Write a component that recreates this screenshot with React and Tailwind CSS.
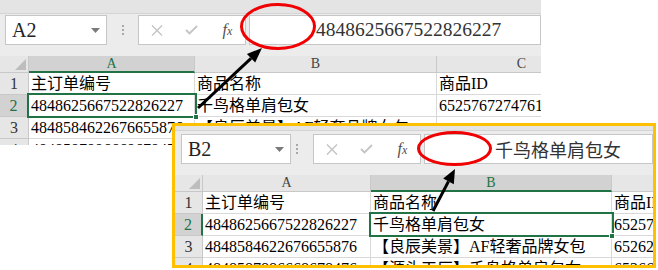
import React from "react";

const GREEN = "#217346";
const cellFont = { fontFamily: '"Liberation Serif", "Noto Sans CJK SC", serif' };

const data = [
  ["主订单编号", "商品名称", "商品ID"],
  ["4848625667522826227", "千鸟格单肩包女", "6525767274761"],
  ["4848584622676655876", "【良辰美景】AF轻奢品牌女包", "6526214985732"],
  ["4848587886668678476", "【源头工厂】千鸟格单肩包女", "6526613598241"],
];

function CancelIcon() {
  return (
    <svg width="12" height="11" viewBox="0 0 12 11">
      <path d="M1 0.5 L11 10.5 M11 0.5 L1 10.5" stroke="#c4c4c4" strokeWidth="1.4" fill="none" />
    </svg>
  );
}

function EnterIcon() {
  return (
    <svg width="13" height="10" viewBox="0 0 13 10">
      <path d="M1 5 L4.5 8.5 L12 1" stroke="#c4c4c4" strokeWidth="1.8" fill="none" />
    </svg>
  );
}

function FxIcon() {
  return (
    <span className="italic text-[16px] leading-none text-[#505050]" style={{ fontFamily: '"Liberation Serif", serif' }}>
      f<span className="text-[12px]">x</span>
    </span>
  );
}

function Dots() {
  return (
    <div className="flex flex-col gap-[2px]">
      <div className="w-[2px] h-[2px] bg-[#a8a8a8]" />
      <div className="w-[2px] h-[2px] bg-[#a8a8a8]" />
      <div className="w-[2px] h-[2px] bg-[#a8a8a8]" />
    </div>
  );
}

function Caret() {
  return (
    <svg width="9" height="5" viewBox="0 0 9 5">
      <path d="M0 0 L9 0 L4.5 5 Z" fill="#7a7a7a" />
    </svg>
  );
}

function FormulaBar({ name, nameClass, dotsClass, inputClass, children }) {
  return (
    <div className="flex items-center h-[30px]">
      <div className={`h-[30px] bg-white border border-[#c6c6c6] flex items-center justify-between pl-[6px] pr-[6px] ${nameClass}`}>
        <span className="text-[20px] leading-none text-[#222]" style={{ fontFamily: '"Liberation Serif", serif' }}>{name}</span>
        <Caret />
      </div>
      <div className={dotsClass}><Dots /></div>
      <div className="h-[30px] w-[108px] bg-white border border-[#c6c6c6] flex items-center">
        <div className="w-[36px] flex justify-center"><CancelIcon /></div>
        <div className="w-[36px] flex justify-center"><EnterIcon /></div>
        <div className="w-[36px] flex justify-center"><FxIcon /></div>
      </div>
      <div className={`h-[30px] flex-1 bg-white border border-[#c6c6c6] flex items-center ${inputClass}`}>
        {children}
      </div>
    </div>
  );
}

function Grid({ gridClass, selCol, selRow, frameClass, handleClass, hidden = [] }) {
  const headers = ["A", "B", "C"];
  return (
    <div className={`relative grid ${gridClass}`}>
      <div className="h-[17px] bg-[#e6e6e6] border-r border-b border-[#c8c8c8] relative">
        <svg className="absolute right-[2px] bottom-[2px]" width="11" height="11" viewBox="0 0 11 11">
          <path d="M11 0 L11 11 L0 11 Z" fill="#bdbdbd" />
        </svg>
      </div>
      {headers.map((h, i) => (
        <div
          key={h}
          className={
            i === selCol
              ? "h-[17px] bg-[#d2d2d2] border-r border-[#c8c8c8] border-b-2 border-b-[#217346] flex items-center justify-center text-[14px] leading-none text-[#217346]"
              : "h-[17px] bg-[#e6e6e6] border-r border-b border-[#c8c8c8] flex items-center justify-center text-[14px] leading-none text-[#444]"
          }
          style={{ fontFamily: '"Liberation Serif", serif' }}
        >
          {h}
        </div>
      ))}
      {data.map((row, r) => (
        <React.Fragment key={r}>
          <div
            className={
              r === selRow
                ? "h-[22px] bg-[#d2d2d2] border-b border-[#c8c8c8] border-r-2 border-r-[#217346] flex items-center justify-center text-[16px] leading-none text-[#217346]"
                : "h-[22px] bg-[#e6e6e6] border-r border-b border-[#c8c8c8] flex items-center justify-center text-[16px] leading-none text-[#333]"
            }
            style={{ fontFamily: '"Liberation Serif", serif' }}
          >
            {r + 1}
          </div>
          {row.map((c, ci) => (
            <div
              key={ci}
              className="h-[22px] bg-white border-r border-b border-[#d9d9d9] flex items-center pl-[2px] text-[16px] leading-none text-black whitespace-nowrap overflow-hidden"
              style={cellFont}
            >
              {hidden.includes(`${r}-${ci}`) ? "" : c}
            </div>
          ))}
        </React.Fragment>
      ))}
      <div className={`absolute border-2 border-[#217346] ${frameClass}`} />
      <div className={`absolute w-[6px] h-[6px] bg-[#217346] border border-white ${handleClass}`} />
    </div>
  );
}

export default function App() {
  return (
    <div className="relative w-[658px] h-[270px] bg-white overflow-hidden">
      {/* back screenshot */}
      <div className="w-[541px] h-[145px] overflow-hidden bg-[#ececec]">
        <div className="h-[14px] bg-[#e4e4e4] border-b border-[#d4d4d4]" />
        <div className="pt-[1px] pl-[5px] pb-[11px]">
          <FormulaBar
            name="A2"
            nameClass="w-[102px]"
            dotsClass="w-[31px] flex justify-center"
            inputClass="ml-[3px] pl-[66px]"
          >
            <span className="text-[19.5px] leading-none text-[#333]" style={{ fontFamily: '"Liberation Serif", serif' }}>
              4848625667522826227
            </span>
          </FormulaBar>
        </div>
        <Grid
          gridClass="grid-cols-[29px_166px_242px_170px]"
          selCol={0}
          selRow={1}
          hidden={["2-2"]}
          frameClass="left-[27px] top-[37px] w-[170px] h-[25px]"
          handleClass="left-[193px] top-[58px]"
        />
      </div>

      {/* front screenshot */}
      <div className="absolute left-[172px] top-[123px] w-[484px] h-[145px] border-[3px] border-[#ffc000] bg-[#ececec] overflow-hidden">
        <div className="h-[5px] bg-[#e4e4e4] border-b border-[#d4d4d4]" />
        <div className="pt-[3px] pl-[6px] pb-[11px]">
          <FormulaBar
            name="B2"
            nameClass="w-[110px]"
            dotsClass="w-[22px] flex justify-center pr-[10px]"
            inputClass="ml-[3px] pl-[70px]"
          >
            <span className="text-[18px] leading-none text-[#333]" style={{ fontFamily: '"Noto Sans CJK SC", sans-serif' }}>
              千鸟格单肩包女
            </span>
          </FormulaBar>
        </div>
        <Grid
          gridClass="grid-cols-[28px_168px_241px_170px]"
          selCol={1}
          selRow={1}
          frameClass="left-[194px] top-[37px] w-[245px] h-[25px]"
          handleClass="left-[434px] top-[58px]"
        />
      </div>

      {/* annotations */}
      <svg className="absolute left-0 top-0 pointer-events-none" width="658" height="270" viewBox="0 0 658 270">
        <ellipse cx="278" cy="26.5" rx="36.5" ry="22" fill="none" stroke="#f00000" strokeWidth="3" />
        <line x1="198" y1="108" x2="251" y2="58.3" stroke="#000" strokeWidth="3" />
        <polygon points="262,48 255.2,62.6 246.9,53.9" fill="#000" />
        <ellipse cx="454.5" cy="148.5" rx="36" ry="16" fill="none" stroke="#f00000" strokeWidth="3" />
        <line x1="433" y1="211" x2="448.5" y2="181.4" stroke="#000" strokeWidth="3" />
        <polygon points="455,169 453.8,184.2 443.2,178.6" fill="#000" />
      </svg>
    </div>
  );
}
